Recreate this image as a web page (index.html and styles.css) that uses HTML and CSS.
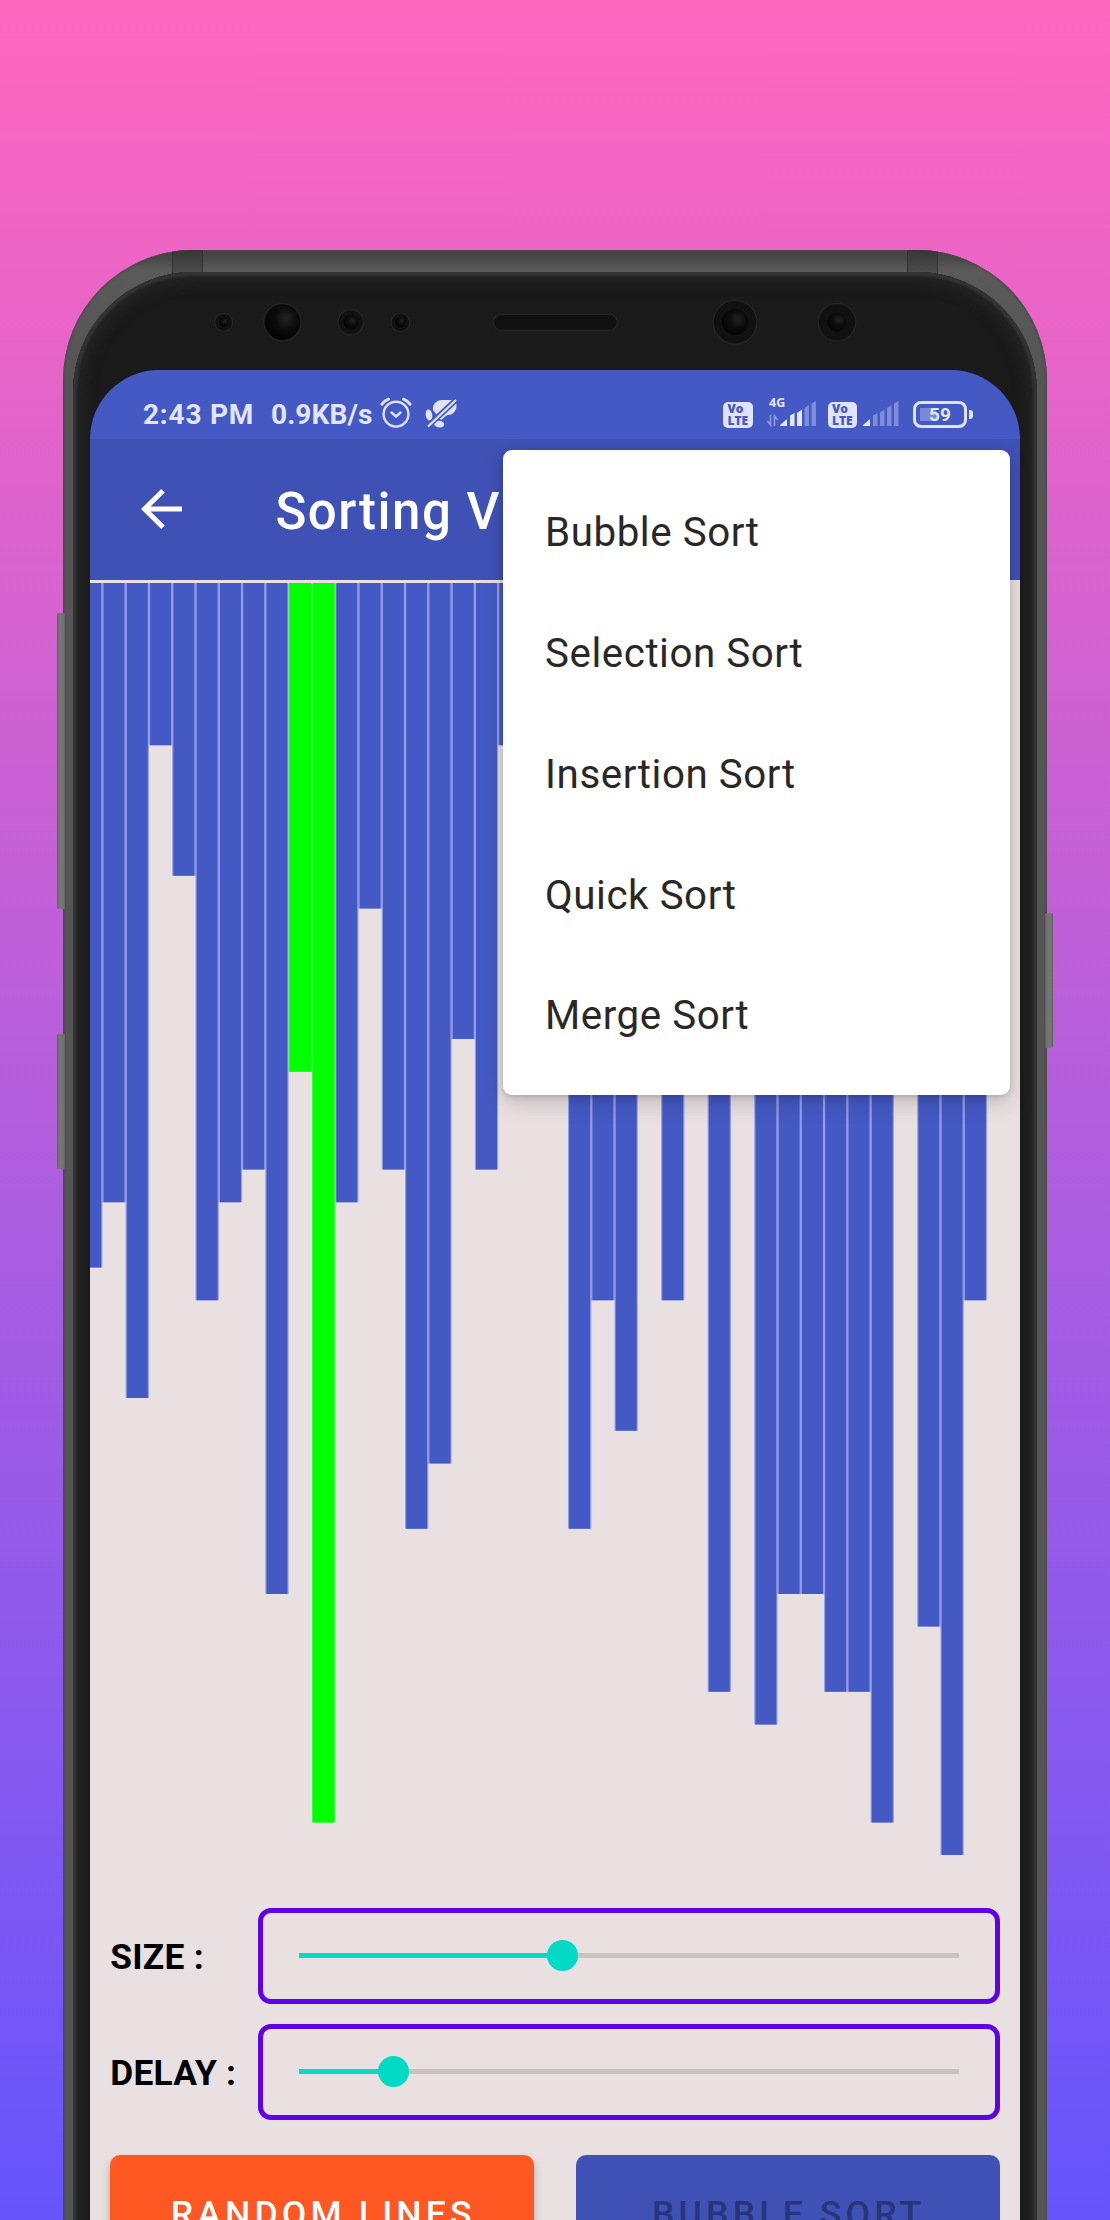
FILE: index.html
```
<!DOCTYPE html>
<html lang="en">
<head>
<meta charset="utf-8">
<title>Sorting Visualizer</title>
<link rel="stylesheet" href="styles.css">
</head>
<body>
<main class="stage">
  <div class="phone">
    <span class="key key-volume"></span>
    <span class="key key-assist"></span>
    <span class="key key-power"></span>
    <div class="frame">
      <div class="bands"><i></i><i></i></div>
      <div class="glass">
        <svg class="sensors" width="960" height="98" viewBox="75 272 960 98">
          <defs>
            <radialGradient id="lens" cx=".6" cy=".4" r=".6"><stop offset="0" stop-color="#242424"/><stop offset=".5" stop-color="#0d0d0d"/><stop offset="1" stop-color="#040404"/></radialGradient>
          </defs>
          <g fill="#111" stroke="#252525" stroke-width="1.2">
            <circle cx="223.7" cy="322.3" r="9"/><circle cx="282.5" cy="322.3" r="18.7"/><circle cx="350.7" cy="322.3" r="12.6"/><circle cx="400.3" cy="322.3" r="9.3"/>
            <rect x="493.3" y="314.4" width="124" height="16" rx="8"/>
            <circle cx="735" cy="322.3" r="21.8"/><circle cx="837" cy="322.3" r="18.8"/>
          </g>
          <g fill="url(#lens)">
            <circle cx="224" cy="322" r="5"/><circle cx="282.5" cy="322" r="17.5"/><circle cx="351" cy="322" r="7.5"/><circle cx="400.5" cy="322" r="5.5"/>
            <circle cx="735" cy="322" r="13"/><circle cx="837" cy="322" r="9.5"/>
          </g>
        </svg>
        <div class="screen">
          <header class="status">
            <div class="status-left">
              <span class="clock">2:43 PM</span>
              <span class="speed">0.9KB/s</span>
              <svg class="alarm" width="32" height="32" viewBox="0 0 32 32" fill="none" stroke="#dfe3fb" stroke-width="2.4" stroke-linecap="round" stroke-linejoin="round"><circle cx="16" cy="17.2" r="12.4"/><path d="M11.5 15.5l4.5 4 4.5-4"/><path d="M2 7.2Q4.5 3.8 8.5 2.2M30 7.2Q27.500 3.800 23.500 2.200" stroke-width="3"/></svg>
              <svg class="muted" width="34" height="32" viewBox="0 0 34 32"><g fill="#dfe3fb"><path d="M9 12C8 6 13 1.500 19 2H31C34 6 33 16 25 17C22 17 21 19 17 22Z"/><ellipse cx="5" cy="17" rx="3.300" ry="5.500" transform="rotate(-10 5 17)"/><ellipse cx="15" cy="26" rx="5.200" ry="3.400" transform="rotate(10 15 26)"/></g><path d="M2 30L33 1" stroke="#4459c4" stroke-width="5.600"/><path d="M4 28.500L32 2" stroke="#dfe3fb" stroke-width="2.200"/></svg>
            </div>
            <div class="status-right">
              <span class="volte"><b>Vo</b><b>LTE</b></span>
              <span class="cell cell-data">
                <small>4G</small>
                <svg width="50" height="26" viewBox="0 0 50 26"><path d="M4.500 14v10l-3-4M8.500 25V15l3 4" fill="none" stroke="#8f9be0" stroke-width="1.600"/><g fill="#e4e7fc"><path d="M14 25v-1l7-6v7zM24 25V14.500l4.500-2.500v13zM31 25V12l5-3.500V25z"/></g><g fill="#7f8cda"><path d="M38.500 25V7l4.500-3v21zM45.500 25V2.500L50 0v25z"/></g></svg>
              </span>
              <span class="volte volte-second"><b>Vo</b><b>LTE</b></span>
              <svg class="cell-two" width="36" height="26" viewBox="0 0 36 26"><path d="M0 25v-1l7-6v7z" fill="#e4e7fc"/><path d="M10 25V14.500l4.500-2.500v13zM17 25V11.500l4.500-3V25zM24 25V7l4.500-3v21zM31 25V2.500L35.500 0v25z" fill="#7f8cda"/></svg>
              <span class="battery"><b>59</b></span>
            </div>
          </header>
          <div class="toolbar">
            <svg class="back" width="42" height="40" viewBox="0 0 42 40" fill="none" stroke="#fff" stroke-width="5"><path d="M41 20H3M22 1.800L3.500 20 22 38.200"/></svg>
            <h1>Sorting V</h1>
          </div>
          <svg class="chart" width="930" height="1280" viewBox="0 0 930 1280">
            <g transform="translate(-10.9 -0.9) scale(23.28 32.64)" fill="none">
              <path class="edge" d="M.5 0v21M1.500 0v19M2.500 0v25M3.500 0v5M4.500 0v9M5.500 0v22M6.500 0v19M7.500 0v18M8.500 0v31M11.500 0v19M12.500 0v10M13.500 0v18M14.500 0v29M15.500 0v27M16.500 0v14M17.500 0v18M18.500 0v5M19.500 0v9M20.500 0v12M21.500 0v29M22.500 0v22M23.500 0v26M24.500 0v12M25.500 0v22M26.500 0v9M27.500 0v34M28.500 0v11M29.500 0v35M30.500 0v31M31.500 0v31M32.500 0v34M33.500 0v34M34.500 0v38M35.500 0v12M36.500 0v32M37.500 0v39M38.500 0v22"/>
              <path class="bar" d="M.5 0v21M1.500 0v19M2.500 0v25M3.500 0v5M4.500 0v9M5.500 0v22M6.500 0v19M7.500 0v18M8.500 0v31M11.500 0v19M12.500 0v10M13.500 0v18M14.500 0v29M15.500 0v27M16.500 0v14M17.500 0v18M18.500 0v5M19.500 0v9M20.500 0v12M21.500 0v29M22.500 0v22M23.500 0v26M24.500 0v12M25.500 0v22M26.500 0v9M27.500 0v34M28.500 0v11M29.500 0v35M30.500 0v31M31.500 0v31M32.500 0v34M33.500 0v34M34.500 0v38M35.500 0v12M36.500 0v32M37.500 0v39M38.500 0v22"/>
              <path class="active-edge" d="M9.500 0v15M10.500 0v38"/>
              <path class="active" d="M9.500 0v15M10.500 0v38"/>
            </g>
          </svg>
          <section class="controls">
            <div class="control">
              <label>SIZE :</label>
              <div class="slider"><div class="track"><div class="fill" style="width:40%"></div><div class="thumb"></div></div></div>
            </div>
            <div class="control">
              <label>DELAY :</label>
              <div class="slider"><div class="track"><div class="fill" style="width:14.3%"></div><div class="thumb"></div></div></div>
            </div>
            <div class="actions">
              <button class="random">RANDOM LINES</button>
              <button class="sort" disabled>BUBBLE SORT</button>
            </div>
          </section>
          <ul class="menu">
            <li>Bubble Sort</li>
            <li>Selection Sort</li>
            <li>Insertion Sort</li>
            <li>Quick Sort</li>
            <li>Merge Sort</li>
          </ul>
        </div>
      </div>
    </div>
  </div>
</main>
</body>
</html>
```
FILE: styles.css
```
* { box-sizing: border-box; }
body { margin: 0; font-family: Roboto, "Liberation Sans", sans-serif; }

.stage {
  height: 2220px;
  padding: 250px 63px 0 63.3px;
  overflow: hidden;
  background: linear-gradient(#ff67be, #6655fc);
}

/* device body */
.phone { position: relative; height: 2300px; }
.key { position: absolute; z-index: 1; width: 9px; background: linear-gradient(90deg, #606060, #787878 30%, #707070 75%, #484848); border-radius: 2px; }
.key-volume { left: -6px; top: 362.5px; height: 296px; }
.key-assist { left: -6px; top: 784px; height: 134.5px; }
.key-power { right: -6px; top: 662.7px; height: 135px; transform: scaleX(-1); }
.frame {
  position: relative;
  height: 100%;
  padding: 22px 10px 0;
  border-radius: 130px 130px 0 0;
  overflow: hidden;
  background: linear-gradient(#434343, #484848 8px, #5a5a5a 20px, #555 120px);
  box-shadow: inset 0 0 2px 1px #484848;
}
.bands { position: absolute; inset: 0 109px auto; display: flex; justify-content: space-between; height: 40px; }
.bands i { width: 31px; background: linear-gradient(#363636, #4b4b4b 22px); border: solid #333; border-width: 0 1px; }
.glass {
  position: relative;
  height: 100%;
  padding: 0 16.7px;
  border-radius: 120px 120px 0 0;
  background: #1a1a1a;
  box-shadow: inset 0 0 2px 4px #333, inset 0 0 14px 9px #262626;
}
.sensors { display: block; margin: 0 -15px; }

/* app screen */
.screen {
  position: relative;
  display: flex;
  flex-direction: column;
  width: 930px;
  height: 2000px;
  border-radius: 76px 76px 0 0;
  background: #e9e1e1;
}
.status {
  display: flex;
  justify-content: space-between;
  height: 69px;
  padding: 26px 53px 0 53px;
  border-radius: 76px 76px 0 0;
  background: #4459c4;
  color: #e2e6fc;
}
.status-left, .status-right { display: flex; align-items: flex-start; }
.clock, .speed { font-size: 28px; font-weight: 700; line-height: 37px; white-space: nowrap; }
.clock { width: 128px; letter-spacing: .8px; }
.speed { width: 109px; letter-spacing: .1px; }
.alarm { margin-top: 1px; }
.muted { margin: 2px 0 0 12px; }
.volte {
  display: flex;
  flex-direction: column;
  width: 29.500px;
  height: 26px;
  margin-top: 5.500px;
  padding: 1px 0 0 4px;
  border-radius: 5px;
  background: #dfe3fb;
  color: #4459c4;
  font: 700 12px/12px "Open Sans", sans-serif;
}
.cell { position: relative; margin: 5px 0 0 13px; height: 27px; }
.cell small { position: absolute; left: 3px; top: -5px; font: 700 12.500px/14px "Open Sans", sans-serif; }
.volte-second { margin-left: 12px; }
.cell-two { margin: 5px 0 0 5.500px; }
.battery {
  position: relative;
  width: 54px;
  height: 27px;
  margin: 5px 0 0 14px;
  border: 3px solid #dfe3fb;
  border-radius: 8px;
  background: linear-gradient(#7c89da, #7c89da) 4px 4px / 16px 13px no-repeat;
  text-align: center;
}
.battery b { font-size: 19px; line-height: 21px; display: block; }
.battery::after { content: ""; position: absolute; right: -9px; top: 6px; width: 4px; height: 9px; border-radius: 0 3px 3px 0; background: #dfe3fb; }
.toolbar {
  display: flex;
  align-items: center;
  height: 141px;
  padding: 0 0 0 51.5px;
  background: #3f51b5;
  color: #fff;
}
.back { margin-bottom: 1px; }
.toolbar h1 { margin: 5px 0 0 92px; font-size: 51px; font-weight: 500; line-height: 60px; letter-spacing: 1.5px; white-space: nowrap; }
.chart { display: block; margin-top: 3px; flex: none; }
.edge { stroke: #939de4; }
.bar { stroke: #4459c4; stroke-width: .9; }
.active-edge { stroke: #62f562; }
.active { stroke: #0f0; stroke-width: .93; }

/* sliders and buttons */
.controls { padding: 44.600px 20.300px 0; }
.control { display: flex; align-items: center; justify-content: space-between; height: 96px; margin-bottom: 20px; }
.control label { padding-top: 2px; color: #000; font-size: 35.3px; font-weight: 700; letter-spacing: .25px; white-space: nowrap; }
.slider { display: flex; align-items: center; width: 741.600px; height: 96px; padding: 0 36px; border: 5px solid #6002e6; border-radius: 13px; }
.track { display: flex; align-items: center; width: 660px; height: 5px; margin-bottom: 1px; background: #c8c2c1; }
.fill { height: 5px; background: #08dac6; }
.thumb { flex: none; width: 31px; height: 31px; margin-left: -15.5px; border-radius: 50%; background: #03dac5; }
.actions { display: flex; gap: 41.500px; padding-top: 15px; }
.actions button { flex: 1; height: 118px; padding: 0 0 0 2px; border: 0; border-radius: 10px; font: 500 35.6px Roboto, sans-serif; letter-spacing: 4.15px; white-space: nowrap; }
.random { background: #ff5722; color: #fff; box-shadow: 0 5px 8px rgba(0,0,0,.25); }
.sort { background: #3f51b5; color: #27357a; }

/* algorithm list over the page */
.menu {
  position: absolute;
  left: 413.3px;
  top: 80.3px;
  width: 506.700px;
  height: 644.300px;
  margin: 0;
  padding: 21px 0 0 41.800px;
  list-style: none;
  border-radius: 9px;
  background: #fff;
  color: #282828;
  box-shadow: 0 8px 22px rgba(0,0,0,.16), 0 2px 6px rgba(0,0,0,.14);
}
.menu li { height: 120.8px; font-size: 40.3px; line-height: 123px; letter-spacing: .55px; }
```
